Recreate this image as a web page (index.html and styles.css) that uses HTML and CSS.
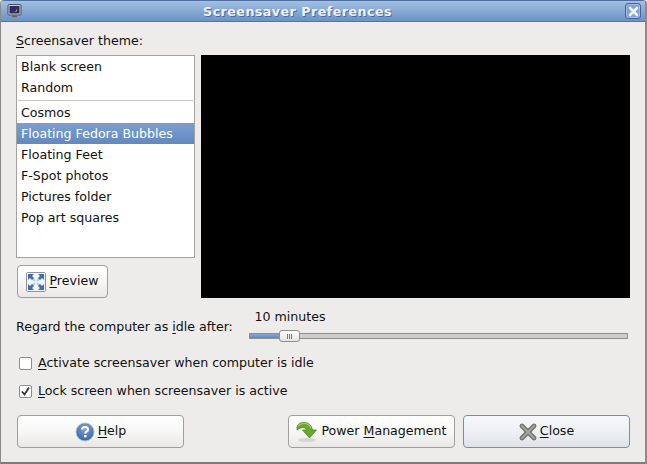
FILE: index.html
```html
<!DOCTYPE html>
<html lang="en">
<head>
<meta charset="utf-8">
<title>Screensaver Preferences</title>
<link rel="stylesheet" href="styles.css">
</head>
<body>
<div class="window">
  <header class="titlebar">
    <svg class="title-icon" width="16" height="16" viewBox="0 0 16 16">
      <rect x="1" y="0.500" width="13" height="10.500" rx="1" fill="#c9cdd6" stroke="#4b4f5c"/>
      <rect x="2.500" y="2" width="10" height="7.500" fill="#2f2d66"/>
      <path d="M6 8 Q9.500 8 10 4.500 Q11 8.500 6 8Z" fill="#e9d33f"/>
      <rect x="5" y="11.500" width="5" height="1.500" fill="#5c6068"/>
      <rect x="3.500" y="13" width="8" height="1.500" fill="#8d9097"/>
    </svg>
    <span class="title-text">Screensaver Preferences</span>
    <span class="title-close">
      <svg width="11" height="11" viewBox="0 0 11 11"><path d="M2 2L9 9M9 2L2 9" stroke="#f2f5fa" stroke-width="2.600" stroke-linecap="round"/></svg>
    </span>
  </header>
  <main class="content">
    <div class="theme-label"><u>S</u>creensaver theme:</div>
    <div class="top">
      <div class="side">
        <ul class="themes">
          <li>Blank screen</li>
          <li>Random</li>
          <li class="sep"></li>
          <li>Cosmos</li>
          <li class="selected">Floating Fedora Bubbles</li>
          <li>Floating Feet</li>
          <li>F-Spot photos</li>
          <li>Pictures folder</li>
          <li>Pop art squares</li>
        </ul>
        <button class="btn btn-preview">
          <svg width="20" height="20" viewBox="0 0 20 20">
            <rect x="0.500" y="0.500" width="19" height="19" rx="1" fill="#f1f4f8" stroke="#8f9398"/>
            <path d="M6 6L9 9M14 6L11 9M6 14L9 11M14 14L11 11" stroke="#b9cde6" stroke-width="2"/>
            <g fill="#3f6fae">
              <path d="M2 2h6L6 4l2 2-2 2-2-2-2 2z"/>
              <path d="M18 2v6l-2-2-2 2-2-2 2-2-2-2z"/>
              <path d="M2 18v-6l2 2 2-2 2 2-2 2 2 2z"/>
              <path d="M18 18h-6l2-2-2-2 2-2 2 2 2-2z"/>
            </g>
          </svg>
          <span class="btn-text"><u>P</u>review</span>
        </button>
      </div>
      <div class="preview"></div>
    </div>
    <div class="idle">
      <span class="idle-label">Regard the computer as <u>i</u>dle after:</span>
      <div class="slider">
        <div class="slider-value">10 minutes</div>
        <div class="track">
          <div class="fill"></div>
          <div class="thumb"><i></i><i></i><i></i></div>
        </div>
      </div>
    </div>
    <label class="check"><span class="box"></span><span class="check-text"><u>A</u>ctivate screensaver when computer is idle</span></label>
    <label class="check check-second"><span class="box">
      <svg width="11" height="11" viewBox="0 0 11 11"><path d="M2 5.500L4.500 8.500L9 1.500" fill="none" stroke="#2e3436" stroke-width="1.800"/></svg>
    </span><span class="check-text"><u>L</u>ock screen when screensaver is active</span></label>
    <div class="actions">
      <button class="btn btn-wide">
        <svg width="20" height="20" viewBox="0 0 20 20">
          <defs><radialGradient id="hg" cx="0.500" cy="0.300" r="0.800"><stop offset="0" stop-color="#7ea3d3"/><stop offset="1" stop-color="#2f5d9e"/></radialGradient></defs>
          <circle cx="10" cy="10" r="9" fill="url(#hg)" stroke="#a9bdd8" stroke-width="1"/>
          <path d="M7 7.600Q7.200 5 10.100 5Q13 5 13 7.400Q13 8.900 11.200 9.800Q10.300 10.300 10.300 11.600" fill="none" stroke="#fff" stroke-width="2.200"/>
          <rect x="9.100" y="13" width="2.400" height="2.400" fill="#fff"/>
        </svg>
        <span class="btn-text"><u>H</u>elp</span>
      </button>
      <div class="spacer"></div>
      <button class="btn btn-wide">
        <svg width="22" height="22" viewBox="0 0 22 22">
          <ellipse cx="11" cy="19" rx="9" ry="2" fill="#d5d5d2"/>
          <path d="M1 6Q2 1.500 8 1.500Q15 1.500 16.500 9H20.500L13.500 17L6.500 9H10.500Q10 6.500 7 6.500Q3.500 6.500 1 9Z" fill="#6aa82f" stroke="#4c8a1e" stroke-width="0.800"/>
          <path d="M2.500 5Q4 2.500 8 2.500Q13 2.500 15 7" fill="none" stroke="#a5d568" stroke-width="1.200"/>
        </svg>
        <span class="btn-text">Power <u>M</u>anagement</span>
      </button>
      <button class="btn btn-wide btn-default">
        <svg width="18" height="18" viewBox="0 0 18 18">
          <path d="M3 3L15 15M15 3L3 15" stroke="#6f716b" stroke-width="4.600" stroke-linecap="round"/>
          <path d="M3 3L15 15M15 3L3 15" stroke="#a3a59f" stroke-width="2" stroke-linecap="round"/>
        </svg>
        <span class="btn-text"><u>C</u>lose</span>
      </button>
    </div>
  </main>
</div>
</body>
</html>
```
FILE: styles.css
```css
* { box-sizing: border-box; }
html, body { margin: 0; height: 100%; }
body {
  font-family: "DejaVu Sans", sans-serif;
  font-size: 12.6px;
  color: #111;
  background: #edeceb;
}
u { text-underline-offset: 2px; }
.window {
  width: 647px;
  height: 464px;
  display: flex;
  flex-direction: column;
  padding-bottom: 2px;
  border-left: 1px solid #8a8a88;
  border-right: 2px solid #8a8a88;
  box-shadow: inset 0 -2px 0 #7c7c7a;
  border-radius: 4px 4px 0 0;
  overflow: hidden;
}
.titlebar {
  height: 22px;
  flex: none;
  margin: 0 -2px 0 -1px;
  display: flex;
  align-items: center;
  justify-content: center;
  position: relative;
  background: linear-gradient(#a3c0e4, #6b93c6);
  border-top: 1px solid #4f6f9f;
  border-bottom: 1px solid #55779f;
  border-radius: 4px 4px 0 0;
}
.title-icon { position: absolute; left: 7px; top: 3px; }
.title-text {
  color: #eef2f8;
  font-weight: bold;
  letter-spacing: 0.5px;
  margin-right: 52px;
  text-shadow: 1px 1px 0 #4a6c9c;
}
.title-close {
  position: absolute;
  right: 6px;
  top: 2px;
  width: 16px;
  height: 16px;
  border: 1px solid #44648f;
  border-radius: 3px;
  background: #7fa2cf;
  box-shadow: inset 0 0 0 1px #a3bde0;
  display: flex;
  align-items: center;
  justify-content: center;
}
.content {
  flex: 1;
  display: flex;
  flex-direction: column;
  padding: 11px 15px 0;
}
.theme-label { height: 22px; line-height: 16px; }
.top { display: flex; gap: 6px; }
.side { width: 179px; display: flex; flex-direction: column; }
.themes {
  list-style: none;
  margin: 0;
  padding: 0;
  height: 203px;
  background: #fff;
  border: 1px solid #a3a29f;
}
.themes li { height: 21px; line-height: 21px; padding-left: 4px; }
.themes .sep { height: 4px; margin: 2px 1px -2px; border-top: 1px solid #c9c8c5; }
.themes .selected {
  color: #fff;
  background: linear-gradient(#7d9fcf, #6089bf);
}
.btn {
  font: inherit;
  color: inherit;
  height: 33px;
  display: flex;
  align-items: center;
  justify-content: center;
  gap: 3px;
  padding: 0;
  background: linear-gradient(#fff 0%, #f8f8f7 45%, #e9e8e6 100%);
  border: 1px solid #a09f9c;
  border-radius: 4px;
}
.btn-text { margin-bottom: 2px; }
.btn-preview { width: 91px; margin: 7px 0 0 1px; }
.btn-wide { width: 167px; }
.preview { width: 430px; height: 243px; background: #000; }
.idle { display: flex; margin-top: 11px; height: 33px; }
.idle-label { width: 233px; padding-top: 10px; line-height: 16px; }
.slider { width: 379px; display: flex; flex-direction: column; }
.slider-value { width: 82px; text-align: center; line-height: 16px; height: 24px; }
.track {
  position: relative;
  height: 6px;
  background: #cfcecb;
  border: 1px solid #8f8e8b;
}
.fill { width: 29px; height: 100%; background: linear-gradient(#86a8d6, #5f89c0); }
.thumb {
  position: absolute;
  left: 29px;
  top: -4px;
  width: 21px;
  height: 12px;
  background: linear-gradient(#fff, #e4e3e1);
  border: 1px solid #8f8e8b;
  border-radius: 3px;
  display: flex;
  gap: 1px;
  align-items: center;
  justify-content: center;
}
.thumb i { display: block; width: 1px; height: 5px; background: #77766f; }
.check { display: flex; align-items: center; gap: 6px; height: 16px; margin: 13px 0 0 3px; }
.check-second { margin-top: 12px; }
.check-text { margin-bottom: 2px; }
.box {
  width: 13px;
  height: 13px;
  background: #fff;
  border: 1px solid #8f8e8b;
  border-radius: 2px;
  display: flex;
  align-items: center;
  justify-content: center;
}
.actions { display: flex; gap: 8px; margin-top: 16px; padding-left: 1px; }
.spacer { width: 88px; }
.btn-default {
  border: 1px solid #6a90c0;
  background: linear-gradient(#f6f8fb 0%, #eef1f5 45%, #dfe2e7 100%);
}
```
